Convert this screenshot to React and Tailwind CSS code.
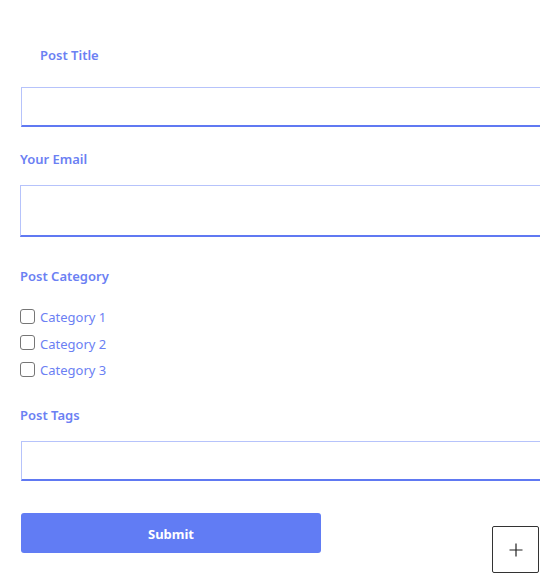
import { useState } from "react";

const CATEGORIES = ["Category 1", "Category 2", "Category 3"];

function Label({ children, className = "" }) {
  return (
    <label
      className={`block font-semibold text-[13px] leading-[18px] text-[#6b80f3] ${className}`}
    >
      {children}
    </label>
  );
}

export default function App() {
  const [checked, setChecked] = useState({});

  return (
    <div
      className="bg-white w-[540px] h-[573px] overflow-hidden"
      style={{ fontFamily: '"Noto Sans", "Open Sans", sans-serif' }}
    >
      <form className="flex flex-col pt-[46px] pl-5" onSubmit={(e) => e.preventDefault()}>
        {/* ── Title ── */}
        <Label className="ml-5">Post Title</Label>
        <input
          type="text"
          className="block mt-[23px] ml-px w-[540px] h-10 border border-[#b6c3fb] border-b-2 border-b-[#6079f2] outline-none"
        />

        {/* ── Email ── */}
        <Label className="mt-[23px]">Your Email</Label>
        <input
          type="email"
          className="block mt-[17px] w-[540px] h-[52px] border border-[#b6c3fb] border-b-2 border-b-[#6079f2] outline-none"
        />

        {/* ── Category ── */}
        <Label className="mt-[30px]">Post Category</Label>
        <div className="flex flex-col mt-[18px]">
          {CATEGORIES.map((c) => (
            <label key={c} className="flex items-center gap-[5px] h-[26.5px]">
              <input
                type="checkbox"
                checked={!!checked[c]}
                onChange={() => setChecked((s) => ({ ...s, [c]: !s[c] }))}
                className="appearance-none w-[15px] h-[15px] border border-[#767676] rounded-[3px] bg-white checked:bg-[#6079f2]"
              />
              <span className="pt-[3px] text-[13px] text-[#6b80f3]">{c}</span>
            </label>
          ))}
        </div>

        {/* ── Tags ── */}
        <Label className="mt-[23px]">Post Tags</Label>
        <input
          type="text"
          className="block mt-[17px] ml-px w-[540px] h-10 border border-[#b6c3fb] border-b-2 border-b-[#6079f2] outline-none"
        />

        {/* ── Actions ── */}
        <div className="flex justify-between items-start mt-8 ml-px pr-px">
          <button
            type="submit"
            className="bg-[#617cf4] pt-1 rounded-[3px] w-[300px] h-10 font-bold text-[13px] text-white"
          >
            Submit
          </button>
          <button
            type="button"
            aria-label="Add"
            className="flex justify-center items-center mt-[13px] border border-[#333] rounded-[2px] w-[47px] h-[47px]"
          >
            <svg width="14" height="14" viewBox="0 0 14 14" className="mt-[2px]">
              <path d="M7 0.5V13.5M0.5 7H13.5" stroke="#222" strokeWidth="1.2" fill="none" />
            </svg>
          </button>
        </div>
      </form>
    </div>
  );
}
